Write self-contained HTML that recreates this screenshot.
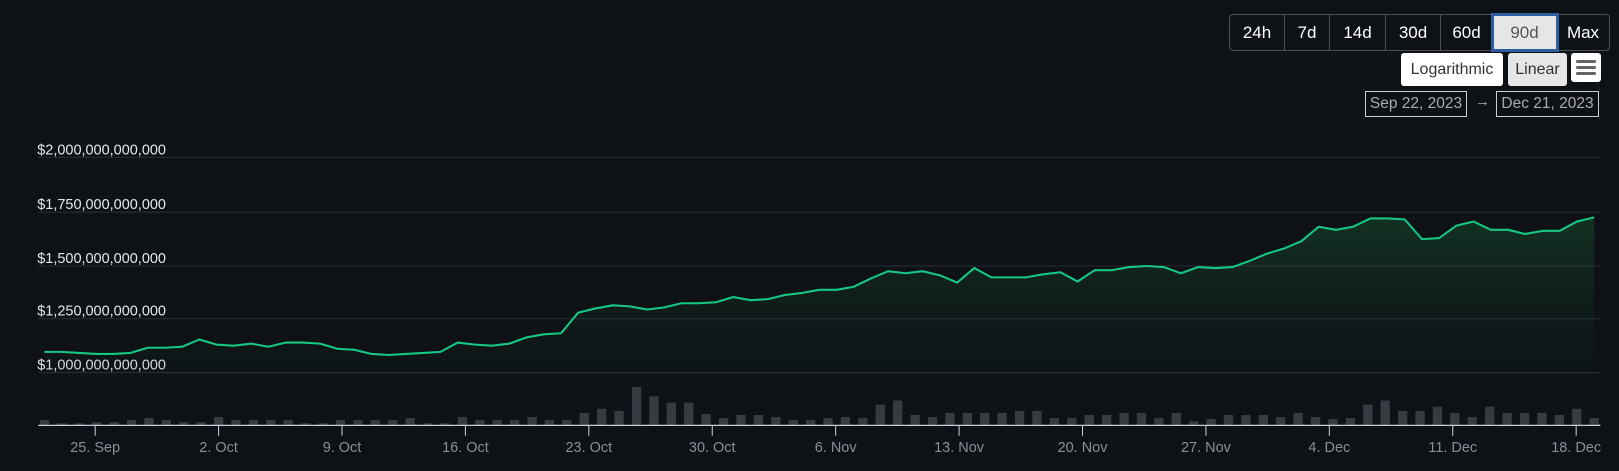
<!DOCTYPE html>
<html><head><meta charset="utf-8"><style>
html,body{margin:0;padding:0;background:#0e1217;width:1619px;height:471px;overflow:hidden;font-family:"Liberation Sans",sans-serif;}
svg{position:absolute;left:0;top:0}
.btns{position:absolute;left:1229px;top:14px;width:381px;height:37px;border:1px solid #4a4e55;border-radius:4px;display:flex;box-sizing:border-box}
.btns div{color:#fff;font-size:17px;display:flex;align-items:center;justify-content:center;border-right:1px solid #4a4e55;box-sizing:border-box}
.btns div:last-child{border-right:none}
.sel{background:#e6e6e6;color:#555!important;outline:3px solid #2d5fa0;outline-offset:-1px}
.b2{position:absolute;top:53px;height:33px;background:#fff;border-radius:3px;color:#333;font-size:16px;display:flex;align-items:center;justify-content:center}
.d{position:absolute;top:91px;height:26px;border:1px solid #ccc;color:#aaa;font-size:15.5px;display:flex;align-items:center;justify-content:center;box-sizing:border-box}
</style></head><body>
<svg id="s" width="1619" height="471" viewBox="0 0 1565 455"></svg>
<div class="btns">
<div style="width:55px">24h</div><div style="width:45px">7d</div><div style="width:56px">14d</div><div style="width:55px">30d</div><div style="width:52px">60d</div><div class="sel" style="width:64px">90d</div><div style="flex:1">Max</div>
</div>
<div class="b2" style="left:1401px;width:102px">Logarithmic</div>
<div class="b2" style="left:1508px;width:59px;background:#e6e6e6">Linear</div>
<div class="b2" style="left:1571px;width:30px;top:53px;height:29px;flex-direction:column;gap:3px">
<span style="display:block;width:20px;height:3px;background:#666;border-radius:2px"></span><span style="display:block;width:20px;height:3px;background:#666;border-radius:2px"></span><span style="display:block;width:20px;height:3px;background:#666;border-radius:2px"></span></div>
<div class="d" style="left:1365px;width:102px">Sep 22, 2023</div>
<div style="position:absolute;left:1475px;top:93px;color:#aaa;font-size:15px">→</div>
<div class="d" style="left:1496px;width:103px">Dec 21, 2023</div>
<script>
var s=document.getElementById('s'),h='';
h+='<defs><linearGradient id="g" gradientUnits="userSpaceOnUse" x1="0" y1="205" x2="0" y2="411"><stop offset="0" stop-color="#1a7a3a" stop-opacity="0.32"/><stop offset="1" stop-color="#0e1217" stop-opacity="0"/></linearGradient></defs>';
var gl=[[152,'$2,000,000,000,000'],[205,'$1,750,000,000,000'],[257,'$1,500,000,000,000'],[308,'$1,250,000,000,000'],[360,'$1,000,000,000,000']];
gl.forEach(function(g){h+='<line x1="37" x2="1547" y1="'+g[0]+'" y2="'+g[0]+'" stroke="#2a2e34" stroke-width="1"/><text x="36" y="'+(g[0]-3)+'" fill="#e4e6ea" font-size="14" font-family="Liberation Sans, sans-serif">'+g[1]+'</text>';});
var ys=[340,340,341,342,342,341,336,336,335,328,333,334,332,335,331,331,332,337,338,342,343,342,341,340,331,333,334,332,326,323,322,302,298,295,296,299,297,293,293,292,287,290,289,285,283,280,280,277,269,262,264,262,266,273,259,268,268,268,265,263,272,261,261,258,257,258,264,258,259,258,252,245,240,233,219,222,219,211,211,212,231,230,218,214,222,222,226,223,223,214,210];
var n=ys.length,x0=43,x1=1541,st=(x1-x0)/(n-1),pts=[];
for(var i=0;i<n;i++)pts.push((x0+i*st).toFixed(1)+','+ys[i]);
var vb=[5,2,2,3,3,5,7,5,3,3,8,5,5,5,5,2,2,5,5,5,5,7,2,2,8,5,5,5,8,5,5,12,16,14,37,28,22,22,11,7,10,10,8,5,5,7,8,7,20,24,10,8,12,12,12,12,14,14,7,7,10,10,12,12,7,12,4,6,10,10,10,8,12,8,6,7,20,24,14,14,18,12,8,18,12,12,12,10,16,7,10,10,12,14];
var nb=90,bs=(1541-43)/(nb-1);
for(var i=0;i<nb;i++){var bh=vb[i]||8;h+='<rect x="'+(43+i*bs-4.5).toFixed(1)+'" y="'+(411-bh)+'" width="9" height="'+bh+'" fill="#383b41"/>';}
h+='<polygon points="'+x0+',411 '+pts.join(' ')+' '+x1+',411" fill="url(#g)"/>';
h+='<polyline points="'+pts.join(' ')+'" fill="none" stroke="#16c784" stroke-width="2" stroke-linejoin="round"/>';
h+='<line x1="37" x2="1547" y1="411" y2="411" stroke="#c8ccd4" stroke-width="1.2"/>';
var xl=['25. Sep','2. Oct','9. Oct','16. Oct','23. Oct','30. Oct','6. Nov','13. Nov','20. Nov','27. Nov','4. Dec','11. Dec','18. Dec'];
for(var k=0;k<xl.length;k++){var tx=92+k*119.3;h+='<line x1="'+tx+'" x2="'+tx+'" y1="411" y2="421" stroke="#c8ccd4" stroke-width="1"/><text x="'+tx+'" y="437" text-anchor="middle" fill="#8a8e96" font-size="14" font-family="Liberation Sans, sans-serif">'+xl[k]+'</text>';}
s.innerHTML=h;
</script>
</body></html>
